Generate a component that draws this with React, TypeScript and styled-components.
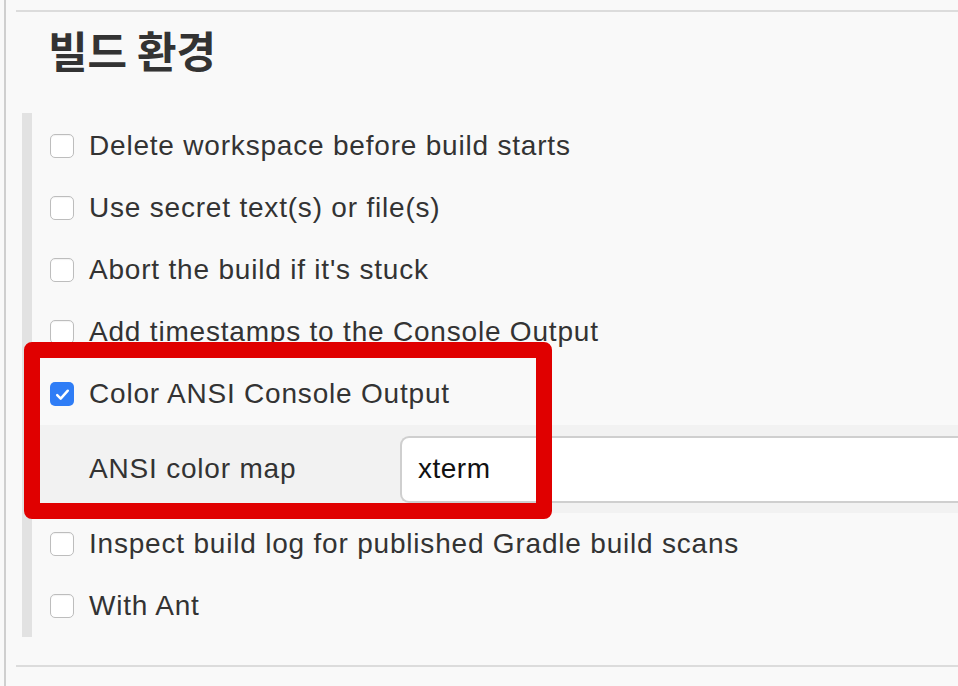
import React from "react";
import styled, { createGlobalStyle } from "styled-components";

const Global = createGlobalStyle`
  html, body { margin: 0; padding: 0; background: #f9f9f9; }
  body { font-family: "Liberation Sans", Arial, sans-serif; color: #333; }
  #root { min-height: 686px; }
`;

const Page = styled.div`
  position: relative;
  height: 686px;
  overflow: hidden;
  padding-left: 4px;
  box-sizing: border-box;
`;

const Panel = styled.div`
  height: 100%;
  border-left: 2px solid #cfcfcf;
  padding-top: 10px;
  box-sizing: border-box;
`;

const Section = styled.section`
  margin-left: 10px;
  border-top: 2px solid #dcdcdc;
  border-bottom: 2px solid #dcdcdc;
`;

const Heading = styled.h2`
  margin: 0;
  padding: 10px 0 0 32px;
  height: 101px;
  box-sizing: border-box;
  font-family: "Noto Sans CJK KR", "Liberation Sans", sans-serif;
  font-weight: 700;
  font-size: 43px;
  line-height: 54px;
  color: #333;
`;

const OptionList = styled.div`
  margin-left: 6px;
  border-left: 10px solid #e2e2e2;
  padding-top: 2px;
  margin-bottom: 28px;
`;

const Row = styled.label`
  display: flex;
  align-items: center;
  height: 62px;
  padding-left: 18px;
  font-size: 28px;
  letter-spacing: 0.8px;
  color: #333;
`;

const Box = styled.span<{ $checked?: boolean }>`
  width: 24px;
  height: 24px;
  box-sizing: border-box;
  border-radius: 5px;
  margin-right: 15px;
  flex: none;
  display: flex;
  align-items: center;
  justify-content: center;
  background: ${(p) => (p.$checked ? "#2f7df6" : "#ffffff")};
  border: ${(p) => (p.$checked ? "none" : "1.5px solid #bdbdbd")};
  box-shadow: ${(p) => (p.$checked ? "none" : "inset 0 1px 1px rgba(0,0,0,0.05)")};
`;

const Nested = styled.div`
  display: flex;
  align-items: center;
  height: 88px;
  background: #f2f2f2;
  padding-left: 57px;
  font-size: 28px;
  letter-spacing: 0.8px;
  color: #333;
`;

const NestedLabel = styled.div`
  width: 311px;
  flex: none;
`;

const Input = styled.div`
  flex: 1;
  height: 67px;
  box-sizing: border-box;
  background: #fff;
  border: 2px solid #cfcfcf;
  border-right: none;
  border-radius: 9px 0 0 9px;
  display: flex;
  align-items: center;
  padding-left: 16px;
  font-size: 28px;
  letter-spacing: 0.5px;
  color: #111;
  margin-right: -10px;
`;

const Highlight = styled.div`
  position: absolute;
  left: 24px;
  top: 342px;
  width: 528px;
  height: 177px;
  box-sizing: border-box;
  border: 16px solid #e00000;
  border-radius: 8px;
  pointer-events: none;
`;

const Check = () => (
  <svg width="17" height="17" viewBox="0 0 16 16">
    <path d="M3 8.6l3.3 3.3L13 4.4" fill="none" stroke="#fff" strokeWidth="2.3" strokeLinecap="round" strokeLinejoin="round" />
  </svg>
);

const Option = ({ label, checked }: { label: string; checked?: boolean }) => (
  <Row>
    <Box $checked={checked}>{checked && <Check />}</Box>
    {label}
  </Row>
);

export default function App() {
  return (
    <Page>
      <Global />
      <Panel>
        <Section>
          <Heading>빌드 환경</Heading>
          <OptionList>
            <Option label="Delete workspace before build starts" />
            <Option label="Use secret text(s) or file(s)" />
            <Option label="Abort the build if it's stuck" />
            <Option label="Add timestamps to the Console Output" />
            <Option label="Color ANSI Console Output" checked />
            <Nested>
              <NestedLabel>ANSI color map</NestedLabel>
              <Input>xterm</Input>
            </Nested>
            <Option label="Inspect build log for published Gradle build scans" />
            <Option label="With Ant" />
          </OptionList>
        </Section>
      </Panel>
      <Highlight />
    </Page>
  );
}
